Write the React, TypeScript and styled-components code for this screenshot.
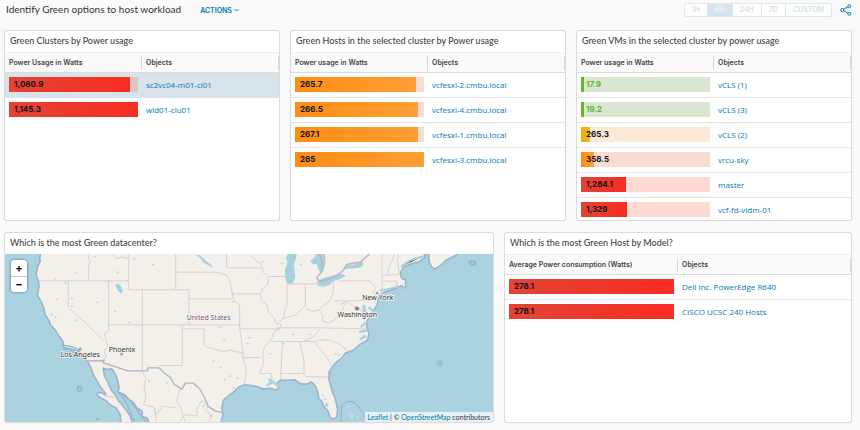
import React from "react";
import styled, { createGlobalStyle } from "styled-components";

const GlobalStyle = createGlobalStyle`
  * { box-sizing: border-box; }
  body {
    margin: 0;
    background: #fafafa;
    color: #444;
    font-family: Inter, "Open Sans", sans-serif;
    font-size: 8px;
  }
  button { font-family: inherit; cursor: pointer; }
  a { text-decoration: none; }
`;

const Page = styled.div`
  display: flex;
  flex-direction: column;
  min-height: 100vh;
  padding: 0 8px 7px 4px;
`;

const TopBar = styled.header`
  display: flex;
  align-items: center;
  height: 30px;
  padding: 0 0 10px 2px;
`;

const PageTitle = styled.h1`
  margin: 0;
  padding-bottom: 2px;
  font-family: Lato, sans-serif;
  font-size: 10px;
  line-height: 18px;
  font-weight: 400;
  color: #333;
`;

const ActionsButton = styled.button`
  display: flex;
  align-items: center;
  gap: 2px;
  margin-left: 19px;
  padding: 0;
  border: 0;
  background: none;
  color: #0079b8;
  font-size: 7px;
  font-weight: 600;
`;

const RangeGroup = styled.div`
  display: flex;
  height: 14px;
  margin-left: auto;
  border: 1px solid #dce8ef;
  border-radius: 2px;
  background: #fff;
`;

const RangeButton = styled.button<{ $active?: boolean }>`
  padding: 0 7px;
  border: 0;
  border-right: 1px solid #dce8ef;
  background: ${(p) => (p.$active ? "#d6e4ee" : "transparent")};
  color: ${(p) => (p.$active ? "#f0f6fa" : "#d8e2e9")};
  font-size: 7px;
  line-height: 12px;
  font-weight: 600;
  &:last-child { border-right: 0; }
`;

const ShareButton = styled.button`
  display: flex;
  margin-left: 8px;
  padding: 0;
  border: 0;
  background: none;
`;

const Rows = styled.main`
  flex: 1;
  display: grid;
  grid-template-rows: repeat(2, minmax(191px, 1fr));
  gap: 11px;
`;

const WidgetRow = styled.div<{ $columns: string }>`
  display: grid;
  grid-template-columns: ${(p) => p.$columns};
  gap: 10px;
  min-height: 0;
`;

const Widget = styled.section`
  display: flex;
  flex-direction: column;
  min-width: 0;
  min-height: 0;
  overflow: hidden;
  background: #fff;
  border: 1px solid #dcdcdc;
  border-radius: 3px;
  box-shadow: 0 0 1px #ddd;
`;

const WidgetTitle = styled.h2`
  flex: none;
  margin: 0;
  padding: 0 5px 2px;
  font-family: Lato, sans-serif;
  font-size: 9px;
  line-height: 19px;
  font-weight: 500;
  color: #444;
  white-space: nowrap;
`;

const TableArea = styled.div`
  flex: 1 1 0;
  min-height: 0;
  overflow: hidden;
`;

const Table = styled.table`
  width: 100%;
  table-layout: fixed;
  border-collapse: separate;
  border-spacing: 0;
`;

const HeadCell = styled.th`
  height: 21px;
  padding: 2px 0;
  border-top: 1px solid #f0f0f0;
  border-bottom: 1px solid #dcdcdc;
  background: #fafafa;
  text-align: left;
`;

const HeadLabel = styled.span`
  display: block;
  padding: 0 4px;
  border-right: 1px solid #d8d8d8;
  color: #444;
  font-size: 7px;
  line-height: 14px;
  font-weight: 600;
  white-space: nowrap;
`;

const Row = styled.tr<{ $selected?: boolean; $ruled?: boolean }>`
  background: ${(p) => (p.$selected ? "#d9e4ea" : "#fff")};
  td { border-bottom: 1px solid ${(p) => (p.$selected ? "#d9e4ea" : p.$ruled ? "#e4e4e4" : "transparent")}; }
`;

const Cell = styled.td`
  height: 25px;
  padding: 0 4px 1px;
  font-size: 8px;
  white-space: nowrap;
`;

type Tone = "red" | "orange" | "amber" | "green";

const tones: Record<Tone, { fill: string; track: string; text: string }> = {
  red: { fill: "linear-gradient(90deg, #e24434, #f92c22)", track: "#fddad3", text: "#111" },
  orange: { fill: "linear-gradient(90deg, #ff8d14, #ff9e34)", track: "#f9ddd2", text: "#111" },
  amber: { fill: "linear-gradient(90deg, #eab010, #f0bb20)", track: "#faead3", text: "#111" },
  green: { fill: "#62b823", track: "#d9e7d2", text: "#60b321" },
};

const Meter = styled.div<{ $tone: Tone; $muted?: boolean }>`
  display: grid;
  height: 15px;
  background: ${(p) => (p.$muted ? "#dfc6c2" : tones[p.$tone].track)};
  color: ${(p) => tones[p.$tone].text};
`;

const MeterFill = styled.div<{ $tone: Tone }>`
  grid-area: 1 / 1;
  background: ${(p) => tones[p.$tone].fill};
`;

const MeterValue = styled.span`
  grid-area: 1 / 1;
  padding-left: 5px;
  line-height: 15px;
  font-weight: 700;
`;

const ObjectLink = styled.a`
  display: block;
  color: #0079b8;
  font-family: "Open Sans", sans-serif;
  line-height: 15px;
`;

type Item = { value: string; percent: number; tone: Tone; name: string; selected?: boolean };

function PowerTable({ metric, items, closeLast }: { metric: string; items: Item[]; closeLast?: boolean }) {
  return (
    <TableArea>
      <Table>
        <thead>
          <tr>
            <HeadCell scope="col"><HeadLabel>{metric}</HeadLabel></HeadCell>
            <HeadCell scope="col"><HeadLabel>Objects</HeadLabel></HeadCell>
          </tr>
        </thead>
        <tbody>
          {items.map((item, i) => (
            <Row key={item.name} $selected={item.selected} $ruled={closeLast || i < items.length - 1}>
              <Cell>
                <Meter $tone={item.tone} $muted={item.selected}>
                  <MeterFill $tone={item.tone} style={{ width: `${item.percent}%` }} />
                  <MeterValue>{item.value}</MeterValue>
                </Meter>
              </Cell>
              <Cell><ObjectLink href="#">{item.name}</ObjectLink></Cell>
            </Row>
          ))}
        </tbody>
      </Table>
    </TableArea>
  );
}

const MapArea = styled.div`
  position: relative;
  flex: 1 1 0;
  min-height: 0;
  background: #aad3df;
`;

const MapDrawing = styled.svg`
  display: block;
  width: 100%;
  height: 100%;
`;

const ZoomControl = styled.div`
  position: absolute;
  top: 6px;
  left: 6px;
  display: flex;
  flex-direction: column;
  width: 16px;
  background: #fff;
  border-radius: 3px;
  box-shadow: 0 0 3px rgba(0, 0, 0, 0.5);
`;

const ZoomButton = styled.button`
  height: 16px;
  padding: 0;
  border: 0;
  background: none;
  color: #000;
  font-size: 11px;
  line-height: 15px;
  font-weight: 700;
  & + & { border-top: 1px solid #ccc; }
`;

const Attribution = styled.div`
  position: absolute;
  right: 0;
  bottom: 0;
  padding: 0 3px;
  background: rgba(255, 255, 255, 0.7);
  color: #333;
  font-family: Lato, sans-serif;
  font-size: 7px;
  line-height: 10px;
  a { color: #0078a8; }
`;

const coast = [
  "M122 87L120 100L121 112L113 128L109 150L116 170L118 185L113 212L124 230L132 250L136 270L148 288L152 300L166 315L177 333L190 352L192 368L215 374L235 378L244 392L262 408L275 432L280 450L290 465L300 484L316 504L318 514L305 506L294 505L292 512L304 520L318 527L330 540L350 550L361 570L364 600L398 600L390 575L372 550L355 530L345 512L333 497L325 478L313 455L309 430L322 434L336 432L346 447L353 465L358 490L354 502L370 508L385 524L400 532L412 550L428 560L426 575L442 580L450 600L660 600L668 572L665 548L670 526L686 512L702 500L715 487L735 480L752 482L772 486L792 493L812 490L828 496L836 488L828 477L840 466L862 467L885 465L902 477L920 478L935 471L948 486L955 508L957 522L966 530L972 545L984 558L992 580L1000 583L1010 577L1012 556L1007 530L995 497L986 464L987 440L1005 415L1022 402L1036 385L1060 376L1078 360L1102 346L1106 328L1099 305L1101 288L1115 265L1130 242L1136 218L1145 205L1190 190L1204 183L1216 190L1216 167L1204 162L1200 145L1210 127L1240 115L1256 112L1275 98L1276 70L122 70Z",
  "M1286 70L1288 112L1295 126L1305 133L1325 119L1336 107L1355 98L1400 75Z",
].join("");

const lakes = [
  "M866 80L858 102L863 112L855 135L855 158L862 178L875 180L886 160L884 140L882 120L888 102L891 80Z",
  "M940 80L948 94L932 108L938 120L950 118L954 132L962 148L971 138L977 112L974 80Z",
  "M950 174L966 162L995 154L1026 148L1038 154L1022 163L1000 170L987 182L970 187L953 184Z",
  "M1028 134L1040 124L1062 120L1086 110L1091 119L1080 130L1052 132Z",
  "M346 181L355 178L364 187L369 201L362 207L353 198Z",
  "M976 534L986 538L983 548L976 544Z",
  "M1138 195L1164 191L1197 182L1200 186L1174 194L1140 202Z",
  "M1088 240L1096 242L1099 260L1094 278L1088 270Z",
  "M587 90L600 92L614 106L630 118L642 132L628 124L610 114L600 100Z",
].join("");

const stateLines = [
  "M118 169H386M266 169V124L270 110L265 100L270 87M386 87V196H567M336 87L350 102L364 98L384 101M326 169V301M205 169V248L310 346M427 196V439M326 301H719M326 301V320L314 326L318 345L322 362L312 380L318 396L309 410",
  "M527 87V196M527 143H648L672 150L681 152M567 196V301M567 223H700M547 301V423H476M547 313H612V362L630 370L648 375L670 381L690 377L712 382L728 385L730 410L739 432L736 460L732 480",
  "M681 130L679 87M681 130H788M681 152L690 172L694 190L700 222L712 234L720 246M694 208H782M719 248V313L730 385M719 313H840M728 399H782",
  "M750 92L770 108L787 126L790 144L806 160L803 180L788 192L781 210L785 230L800 240L806 262L822 280L828 298L844 300L842 312L824 320L816 340L800 358L790 376L788 400L792 420L782 436L779 447H814L816 472",
  "M806 156H856M861 178V240L854 258L850 282L828 298M861 178H960M916 178V244L900 258L888 272L868 276L850 282M916 252L940 260L958 256L972 242L990 228L1000 205V169",
  "M1018 169H1110L1128 190L1120 205L1130 218L1122 236M1002 229H1098M958 256L970 276L966 288L984 296L1004 286L1022 266L1034 240M1022 240L1040 232L1060 245L1088 260M828 310H960L1097 313",
  "M960 313L945 333L925 345L912 350M812 351H950L960 346L988 347L1016 357L1040 376M847 351L842 462M900 351L912 410V447H842M910 447L920 456L974 458L986 454M945 353L962 376L982 400L994 424",
  "M1146 87V206M1146 152H1180L1200 148M1146 170H1190V190M1164 150L1166 130L1178 105L1184 87M1196 87L1192 110L1198 146",
  "M426 439L438 460L432 486L438 520L430 540L462 548L468 570L488 545L528 550M540 493L530 530L542 550L555 591M540 590L555 570L590 575L592 550L606 528L625 546L615 558L636 575L626 591M625 546L650 558M318 517H348M462 548L470 591",
].join("");

const nationalLines =
  "M262 409L312 408L310 415L384 439H443V430H477L492 445L510 458L523 480L546 494L556 476L580 476L598 492L612 516L625 546L645 560L668 564M1110 87L1082 112L1040 120L1030 138L1008 154L985 164L958 171L950 160L964 142L968 120L958 87M1270 87L1276 96";

const ponds: Array<[number, number]> = [
  [165, 163], [197, 176], [226, 146], [170, 225], [215, 222], [214, 245], [155, 270], [166, 278], [228, 287], [292, 234],
  [345, 260], [388, 294], [400, 103], [352, 143], [458, 121], [284, 96], [660, 308], [672, 345], [700, 232], [748, 340],
  [640, 410], [662, 430], [690, 455], [712, 462], [674, 466], [700, 490], [742, 358], [810, 388], [846, 118], [902, 120],
  [786, 112], [878, 330], [850, 358], [930, 330], [1006, 388], [1016, 392], [968, 512], [974, 524], [1092, 332], [1084, 345],
  [820, 470], [806, 476], [630, 575], [500, 476], [446, 470], [610, 545],
];

const smallIslands =
  "M233 485L244 486L246 498L237 502L232 494ZM287 584L292 580L297 586ZM1407 112L1418 108L1428 112L1426 120L1412 122ZM1312 413L1322 409L1328 414L1324 421L1314 420Z";

function UsMap() {
  return (
    <MapDrawing viewBox="15 87 1464 507" preserveAspectRatio="xMidYMid slice" role="img" aria-label="Map of the United States">
      <rect x="-2000" y="-2000" width="6000" height="6000" fill="#aad3df" />
      <path d={coast} fill="#f3efe9" stroke="#9dbdd4" strokeWidth="7" strokeLinejoin="round" />
      <path d={coast} fill="#f3efe9" stroke="#98abcb" strokeWidth="3" strokeLinejoin="round" />
      <path d={lakes} fill="#a5d2de" />
      <path d="M188 362L212 366L235 374L240 386L222 384L212 376L192 374ZM352 500L366 514L382 540L392 566L404 590M372 508L392 530L408 552L424 574L436 590" fill="none" stroke="#98b6d0" strokeWidth="4" />
      <path d="M1098 294L1084 306M1100 318L1080 322M1096 336L1082 342M808 466L832 482M816 474L802 482M1108 250L1118 258M1206 125L1230 108L1268 96" stroke="#a5d2de" strokeWidth="7" strokeLinecap="round" />
      <path d={stateLines} fill="none" stroke="#dccddb" strokeWidth="3" strokeLinejoin="round" />
      <path d={nationalLines} fill="none" stroke="#c4a9c5" strokeWidth="4" strokeLinejoin="round" />
      <path d="M1023 594L1025 545L1042 530L1062 533L1077 548L1088 568L1108 594" fill="none" stroke="#98abcb" strokeWidth="3" />
      <path d="M1040 548L1052 545M1048 562L1056 580L1062 566M1070 575L1078 584" fill="none" stroke="#d5e5e8" strokeWidth="3" />
      <path d={smallIslands} fill="#a9c5dc" stroke="#98abcb" strokeWidth="3" />
      {ponds.map(([x, y]) => (
        <path key={`${x}-${y}`} d={`M${x - 4} ${y}l4 -3l5 2l-3 4z`} fill="#b1d8e1" />
      ))}
      <g fill="#ddd" stroke="#666" strokeWidth="2">
        <circle cx="241" cy="374" r="3" />
        <circle cx="365" cy="389" r="3" />
        <circle cx="1132" cy="206" r="3" />
        <circle cx="1071" cy="252" r="5" fill="#888" />
      </g>
      <g
        fontFamily="'Noto Sans', sans-serif"
        fontSize="21"
        textAnchor="middle"
        fill="#333"
        stroke="#f8f6f2"
        strokeWidth="4"
        paintOrder="stroke"
      >
        <text x="241" y="396">Los Angeles</text>
        <text x="366" y="382">Phoenix</text>
        <text x="1133" y="226">New York</text>
        <text x="1072" y="278">Washington</text>
        <text x="626" y="287" fill="#7d5683">United States</text>
      </g>
    </MapDrawing>
  );
}

const clusters: Item[] = [
  { value: "1,080.9", percent: 94, tone: "red", name: "sc2vc04-m01-cl01", selected: true },
  { value: "1,145.3", percent: 100, tone: "red", name: "wld01-clu01" },
];

const hosts: Item[] = [
  { value: "265.7", percent: 94, tone: "orange", name: "vcfesxi-2.cmbu.local" },
  { value: "266.5", percent: 95, tone: "orange", name: "vcfesxi-4.cmbu.local" },
  { value: "267.1", percent: 95, tone: "orange", name: "vcfesxi-1.cmbu.local" },
  { value: "285", percent: 100, tone: "orange", name: "vcfesxi-3.cmbu.local" },
];

const machines: Item[] = [
  { value: "17.9", percent: 2, tone: "green", name: "vCLS (1)" },
  { value: "19.2", percent: 2, tone: "green", name: "vCLS (3)" },
  { value: "265.3", percent: 7, tone: "amber", name: "vCLS (2)" },
  { value: "358.5", percent: 10, tone: "orange", name: "vrcu-sky" },
  { value: "1,284.1", percent: 35, tone: "red", name: "master" },
  { value: "1,329", percent: 36, tone: "red", name: "vcf-fd-vidm-01" },
];

const models: Item[] = [
  { value: "278.1", percent: 100, tone: "red", name: "Dell Inc. PowerEdge R640" },
  { value: "278.1", percent: 100, tone: "red", name: "CISCO UCSC 240 Hosts" },
];

const ranges = ["1H", "6H", "24H", "7D", "CUSTOM"];

export default function App() {
  return (
    <>
      <GlobalStyle />
      <Page>
        <TopBar>
          <PageTitle>Identify Green options to host workload</PageTitle>
          <ActionsButton type="button">
            ACTIONS
            <svg width="5" height="4" viewBox="0 0 5 4" fill="none" stroke="currentColor">
              <path d="M.5 1l2 2l2-2" />
            </svg>
          </ActionsButton>
          <RangeGroup role="group" aria-label="Time range">
            {ranges.map((range) => (
              <RangeButton key={range} type="button" $active={range === "6H"} aria-pressed={range === "6H"}>
                {range}
              </RangeButton>
            ))}
          </RangeGroup>
          <ShareButton type="button" aria-label="Share">
            <svg width="12" height="12" viewBox="0 0 12 12" fill="none" stroke="#0079b8">
              <path d="M3.6 5.2L8 2.8M3.6 6.8L8 9.2" />
              <circle cx="2.2" cy="6" r="1.5" />
              <circle cx="9.4" cy="2.2" r="1.5" />
              <circle cx="9.4" cy="9.8" r="1.5" />
            </svg>
          </ShareButton>
        </TopBar>
        <Rows>
          <WidgetRow $columns="repeat(3, minmax(0, 1fr))">
            <Widget>
              <WidgetTitle>Green Clusters by Power usage</WidgetTitle>
              <PowerTable metric="Power Usage in Watts" items={clusters} />
            </Widget>
            <Widget>
              <WidgetTitle>Green Hosts in the selected cluster by Power usage</WidgetTitle>
              <PowerTable metric="Power usage in Watts" items={hosts} />
            </Widget>
            <Widget>
              <WidgetTitle>Green VMs in the selected cluster by power usage</WidgetTitle>
              <PowerTable metric="Power usage in Watts" items={machines} closeLast />
            </Widget>
          </WidgetRow>
          <WidgetRow $columns="minmax(0, 490fr) minmax(0, 348fr)">
            <Widget>
              <WidgetTitle>Which is the most Green datacenter?</WidgetTitle>
              <MapArea>
                <UsMap />
                <ZoomControl>
                  <ZoomButton type="button" aria-label="Zoom in">+</ZoomButton>
                  <ZoomButton type="button" aria-label="Zoom out">−</ZoomButton>
                </ZoomControl>
                <Attribution>
                  <a href="#">Leaflet</a> | © <a href="#">OpenStreetMap</a> contributors
                </Attribution>
              </MapArea>
            </Widget>
            <Widget>
              <WidgetTitle>Which is the most Green Host by Model?</WidgetTitle>
              <PowerTable metric="Average Power consumption (Watts)" items={models} />
            </Widget>
          </WidgetRow>
        </Rows>
      </Page>
    </>
  );
}
